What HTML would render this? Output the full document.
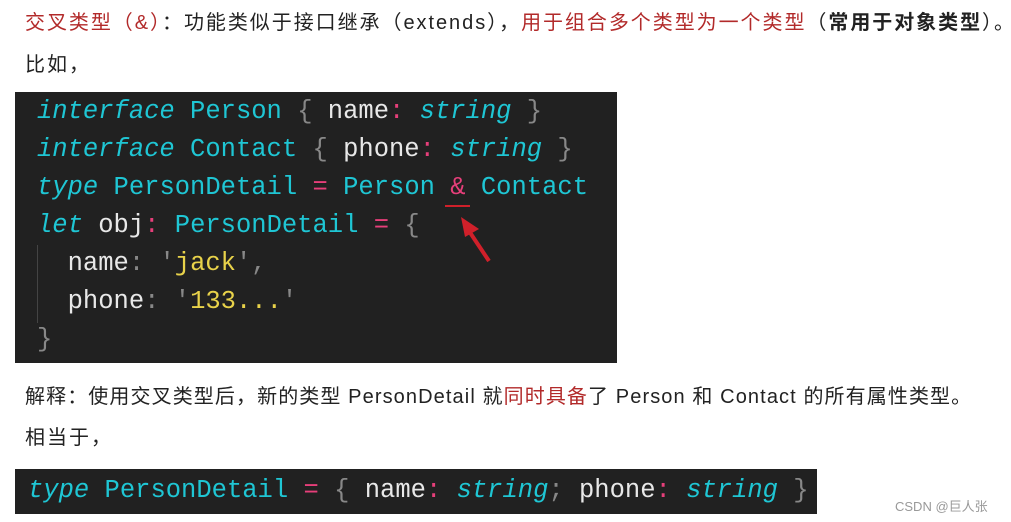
<!DOCTYPE html>
<html><head><meta charset="utf-8"><style>
body{margin:0;width:1011px;height:522px;background:#fff;position:relative;overflow:hidden;font-family:"Liberation Sans","Noto Sans CJK SC",sans-serif;color:#222;}
.t{position:absolute;left:25px;font-size:20px;white-space:nowrap;line-height:24px}
.r{color:#b22a2a}
.code{position:absolute;background:#212121;font-family:"Liberation Mono","DejaVu Sans Mono",monospace;font-size:25.5px;white-space:pre;color:#e8e8e8}
.k{color:#1fc6d4;font-style:italic}.c{color:#1fc6d4}.p{color:#e63f7a}.g{color:#888}.y{color:#e8d24a}
.ln{position:absolute;left:22px;height:38px;line-height:38px}
</style></head><body>
<div class="t" style="top:11px;letter-spacing:1.95px"><span class="r">交叉类型（&amp;）</span>：功能类似于接口继承（extends），<span class="r">用于组合多个类型为一个类型</span>（<b>常用于对象类型</b>）。</div>
<div class="t" style="top:53px;letter-spacing:2px">比如，</div>
<div class="code" style="left:15px;top:92px;width:602px;height:271px">
<div class="ln" style="top:1px"><span class="k">interface</span> <span class="c">Person</span> <span class="g">{</span> name<span class="p">:</span> <span class="k">string</span> <span class="g">}</span></div>
<div class="ln" style="top:39px"><span class="k">interface</span> <span class="c">Contact</span> <span class="g">{</span> phone<span class="p">:</span> <span class="k">string</span> <span class="g">}</span></div>
<div class="ln" style="top:77px"><span class="k">type</span> <span class="c">PersonDetail</span> <span class="p">=</span> <span class="c">Person</span> <span class="p">&amp;</span> <span class="c">Contact</span></div>
<div class="ln" style="top:115px"><span class="k">let</span> obj<span class="p">:</span> <span class="c">PersonDetail</span> <span class="p">=</span> <span class="g">{</span></div>
<div class="ln" style="top:153px">  name<span class="g">:</span> <span class="g">'</span><span class="y">jack</span><span class="g">',</span></div>
<div class="ln" style="top:191px">  phone<span class="g">:</span> <span class="g">'</span><span class="y">133...</span><span class="g">'</span></div>
<div class="ln" style="top:229px"><span class="g">}</span></div>
<div style="position:absolute;left:22px;top:153px;width:1px;height:78px;background:#444"></div>
<div style="position:absolute;left:430px;top:113px;width:25px;height:2px;background:#d0202a"></div>
<svg style="position:absolute;left:440px;top:119px" width="40" height="60"><line x1="34" y1="50" x2="14" y2="20" stroke="#d0202a" stroke-width="4"/><polygon points="6,6 24,18 10,26" fill="#d0202a"/></svg>
</div>
<div class="t" style="top:385px;letter-spacing:1.1px">解释：使用交叉类型后，新的类型 PersonDetail 就<span class="r">同时具备</span>了 Person 和 Contact 的所有属性类型。</div>
<div class="t" style="top:426px;letter-spacing:2px">相当于，</div>
<div class="code" style="left:15px;top:469px;width:802px;height:45px">
<div class="ln" style="left:13px;top:3px"><span class="k">type</span> <span class="c">PersonDetail</span> <span class="p">=</span> <span class="g">{</span> name<span class="p">:</span> <span class="k">string</span><span class="g">;</span> phone<span class="p">:</span> <span class="k">string</span> <span class="g">}</span></div>
</div>
<div style="position:absolute;left:895px;top:496px;font-size:13px;color:#999">CSDN @巨人张</div>
</body></html>
